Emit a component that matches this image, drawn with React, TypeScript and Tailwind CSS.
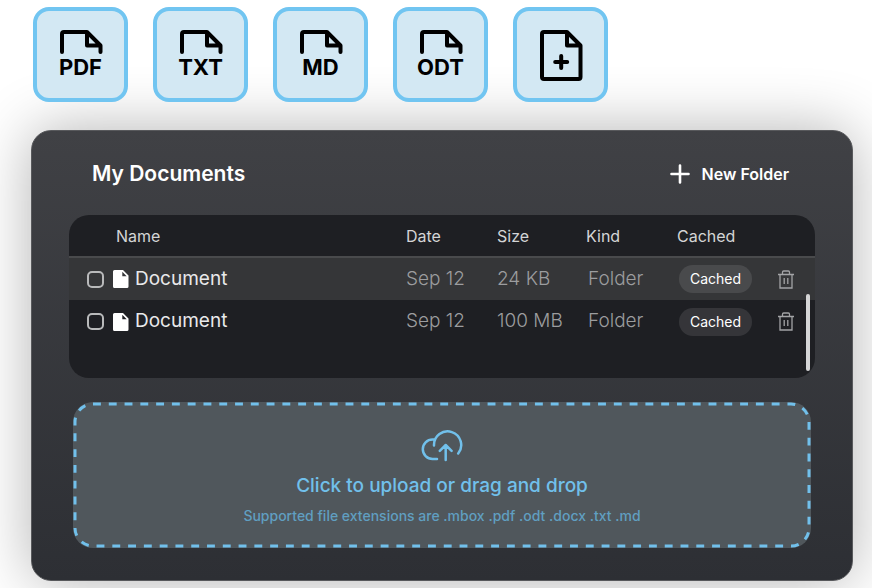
const fileTypes = ["PDF", "TXT", "MD", "ODT"];

const documents = [
  { id: "doc-1", name: "Document", date: "Sep 12", size: "24 KB", kind: "Folder", status: "Cached" },
  { id: "doc-2", name: "Document", date: "Sep 12", size: "100 MB", kind: "Folder", status: "Cached" },
];

const tileClass =
  "flex size-[95px] flex-col items-center rounded-2xl border-4 border-[#71c5f1] bg-[#d3e8f3] pt-[18px] text-black";

function FileTop() {
  return (
    <svg viewBox="0 0 44 26" className="h-[26px] w-11" fill="none" stroke="currentColor" strokeWidth="4" strokeLinecap="round" strokeLinejoin="round" aria-hidden="true">
      <path d="M3 23V5a2 2 0 0 1 2-2h23l13.500 13.500v6.500M28 3v13.500h13.500" />
    </svg>
  );
}

function FilePlus() {
  return (
    <svg viewBox="0 0 44 52" className="h-[52px] w-11" fill="none" stroke="currentColor" strokeWidth="4" strokeLinecap="round" strokeLinejoin="round" aria-hidden="true">
      <path d="M28 3H5a2 2 0 0 0-2 2v43a2 2 0 0 0 2 2h34.500a2 2 0 0 0 2-2V16.500ZM28 3v13.500h13.500M22.200 27v12M16.200 33h12" />
    </svg>
  );
}

function DocumentIcon() {
  return (
    <svg viewBox="0 0 16 18" className="h-[18px] w-4 shrink-0" aria-hidden="true">
      <path fill="#fff" fillRule="evenodd" d="M1.500 0H10l5.500 5.500v11a1.500 1.500 0 0 1-1.500 1.500h-12.500A1.500 1.500 0 0 1 0 16.500v-15A1.500 1.500 0 0 1 1.500 0ZM9.300 1.800V6.200h4.400Z" />
    </svg>
  );
}

function TrashIcon() {
  return (
    <svg viewBox="0 0 16 19" className="h-[19px] w-4" fill="none" stroke="#a3a4a6" strokeWidth="1.300" aria-hidden="true">
      <path d="M0 4.500h16M2 4.500V18h12V4.500M4.500 4.500V2.200A1.200 1.200 0 0 1 5.700 1h4.600a1.200 1.200 0 0 1 1.200 1.200v2.300M6.200 8v6M9.800 8v6" />
    </svg>
  );
}

function UploadIcon() {
  return (
    <svg viewBox="0 0 42 32" className="h-8 w-[42px]" fill="none" stroke="currentColor" strokeWidth="2.500" strokeLinecap="round" strokeLinejoin="round" aria-hidden="true">
      <path d="M16 29H11.500A9.700 9.700 0 0 1 11.500 9.600H13.500M13 15.500A13.600 13.600 0 1 1 37.200 23.500M24.700 30V15M18.800 20.800L24.700 15L30.600 20.800" />
    </svg>
  );
}

export default function App() {
  return (
    <main className="flex min-h-screen flex-col gap-7 overflow-hidden bg-white pt-[7px] pr-[19px] pb-2 pl-[31px] font-['Inter','Liberation_Sans',sans-serif] text-white">
      <div className="relative z-10 flex gap-[25px] px-0.5">
        {fileTypes.map((type) => (
          <button key={type} type="button" className={tileClass}>
            <FileTop />
            <span className="text-[22px] leading-6 font-bold">{type}</span>
          </button>
        ))}
        <button type="button" aria-label="Add file" className={tileClass}>
          <FilePlus />
        </button>
      </div>

      <section className="flex flex-1 flex-col rounded-[20px] border border-[#58595c] bg-linear-to-b from-[#404145] to-[#2d2f34] px-[37px] pb-8 shadow-[0_0_60px_rgba(0,0,0,0.3)]">
        <header className="flex h-[84px] items-center justify-between pt-0.5 pr-[26px] pl-[23px]">
          <h1 className="text-[21px] leading-7 font-semibold">My Documents</h1>
          <button type="button" className="flex items-center gap-3 text-base font-semibold">
            <svg viewBox="0 0 20 20" className="size-5" stroke="currentColor" strokeWidth="2.600" strokeLinecap="round" aria-hidden="true">
              <path d="M10 1.500v17M1.500 10h17" />
            </svg>
            New Folder
          </button>
        </header>

        <div className="relative min-h-[163px] overflow-hidden rounded-[20px] bg-[#1e1f23]">
          <table className="w-full table-fixed border-collapse text-left">
            <colgroup>
              <col />
              <col className="w-[91px]" />
              <col className="w-[89px]" />
              <col className="w-[91px]" />
              <col className="w-[101px]" />
              <col className="w-[37px]" />
            </colgroup>
            <thead>
              <tr className="h-[42px] border-b-2 border-[#494a4c] text-base text-[#d4d5d6]">
                <th className="pl-[47px] font-normal">Name</th>
                <th className="font-normal">Date</th>
                <th className="font-normal">Size</th>
                <th className="font-normal">Kind</th>
                <th className="font-normal">Cached</th>
                <th aria-label="Actions" />
              </tr>
            </thead>
            <tbody>
              {documents.map((doc) => (
                <tr key={doc.id} className="h-[43px] text-[19px] font-light text-[#9c9d9f] odd:bg-[#353638]">
                  <td className="pl-[18px]">
                    <div className="flex items-center">
                      <input id={doc.id} type="checkbox" className="size-[17px] appearance-none rounded-[5px] border-2 border-[#b9babb] checked:bg-[#71c5f1]" />
                      <label htmlFor={doc.id} className="ml-[9px] flex items-center gap-1.5 font-normal text-[#e9e9ea]">
                        <DocumentIcon />
                        {doc.name}
                      </label>
                    </div>
                  </td>
                  <td>{doc.date}</td>
                  <td className="whitespace-nowrap">{doc.size}</td>
                  <td className="pl-0.5">{doc.kind}</td>
                  <td className="pl-0.5">
                    <span className="flex h-7 w-[73px] items-center justify-center rounded-full bg-white/10 text-sm font-normal text-white">
                      {doc.status}
                    </span>
                  </td>
                  <td>
                    <button type="button" aria-label={`Delete ${doc.name}`} className="flex items-center">
                      <TrashIcon />
                    </button>
                  </td>
                </tr>
              ))}
            </tbody>
          </table>
          <div className="absolute right-[5px] bottom-[7px] h-[77px] w-1 rounded-full bg-[#d5d5d6]" />
        </div>

        <button type="button" className="relative mx-1 mt-6 flex min-h-[146px] flex-col items-center rounded-[20px] bg-[#50575c] pt-[28px] text-[#71c0eb]">
          <svg className="absolute inset-0 size-full overflow-visible p-0.5" fill="none" stroke="currentColor" strokeWidth="3" aria-hidden="true">
            <rect width="100%" height="100%" rx="18" pathLength="218" strokeDasharray="1 1" />
          </svg>
          <UploadIcon />
          <span className="mt-3 text-[19px] leading-6 font-medium">Click to upload or drag and drop</span>
          <span className="mt-2 text-sm leading-5 font-medium text-[#609fc1]">
            Supported file extensions are .mbox .pdf .odt .docx .txt .md
          </span>
        </button>
      </section>
    </main>
  );
}
